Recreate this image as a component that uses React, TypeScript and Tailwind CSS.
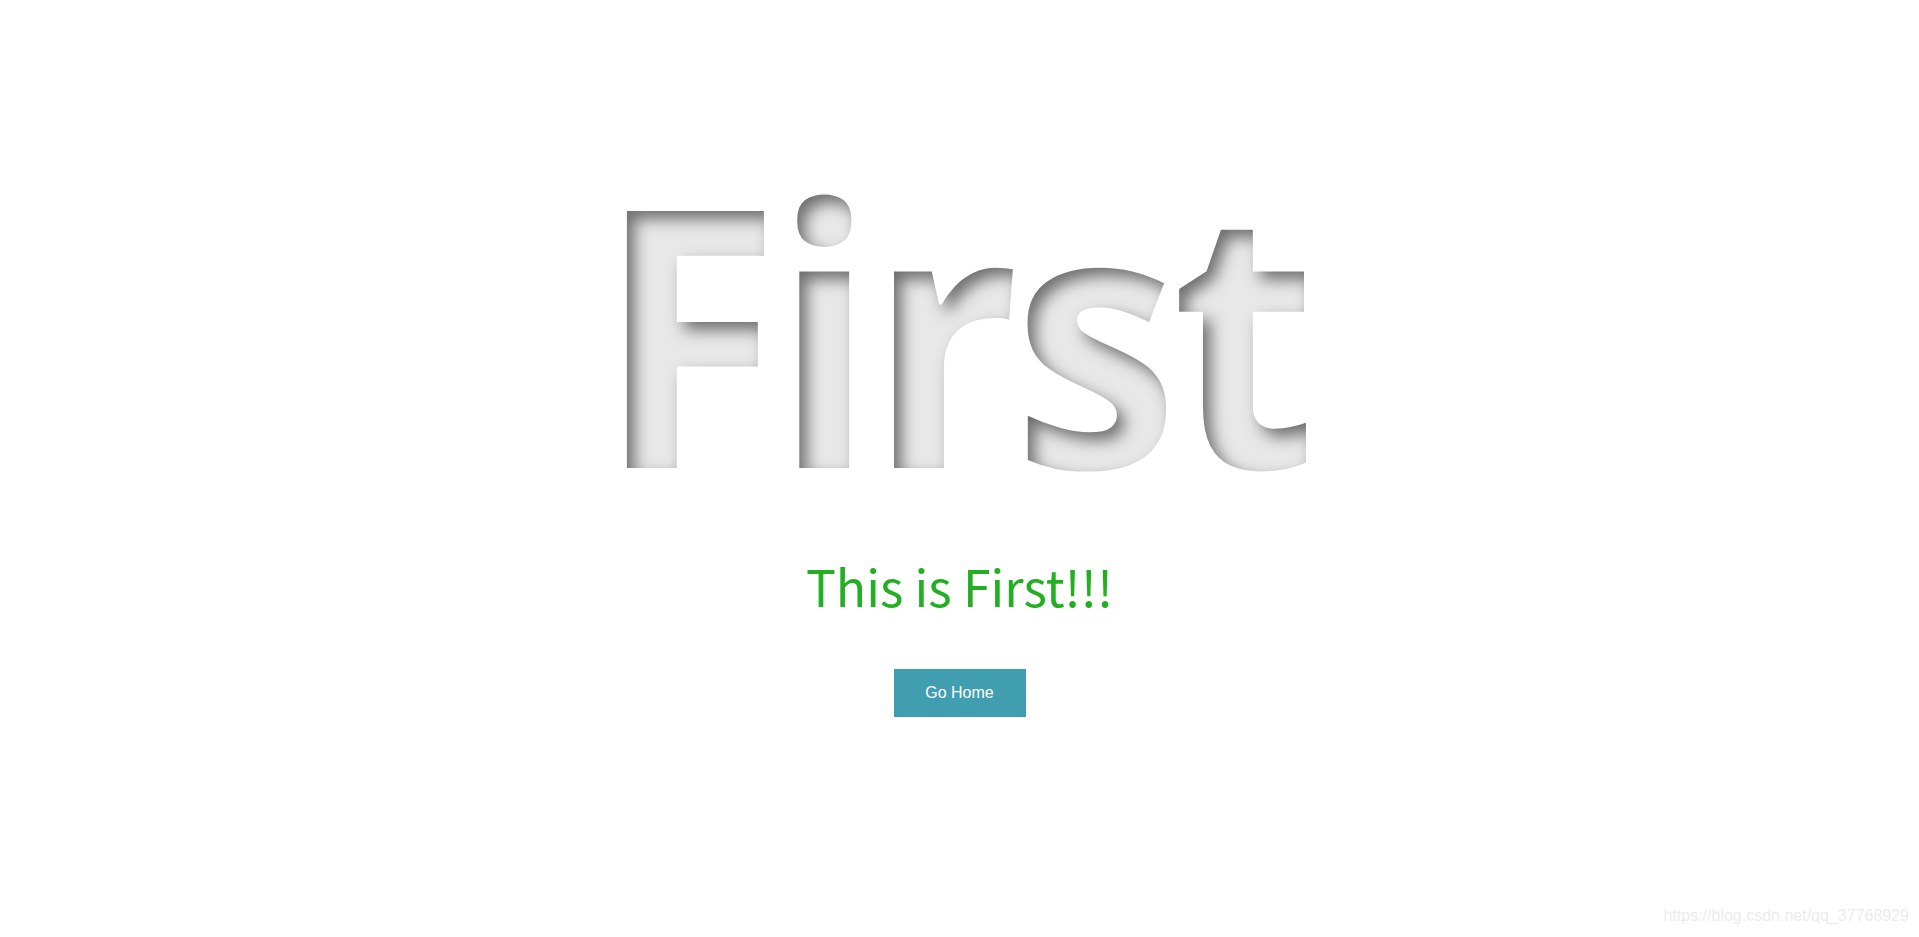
export default function App() {
  return (
    <div className="relative min-h-[937px] bg-white">
      <div className="flex flex-col items-center pt-[148px]">
        {/* big inset title */}
        <h1 className="mr-[13px] scale-x-[0.93] text-[360px] leading-none font-[750] tracking-[-8px] bg-[#6e6e6e] bg-clip-text text-transparent [text-shadow:8px_8px_16px_rgba(255,255,255,0.84)] [font-family:'Open_Sans',sans-serif]">
          First
        </h1>

        <p className="mt-[52px] text-[50px] leading-none text-[#22b022] [font-family:'Noto_Sans_CJK_SC',sans-serif]">
          This is First!!!
        </p>

        <button className="mt-[59px] w-[132px] h-[48px] bg-[#419eb0] text-white text-[16px] [font-family:'Liberation_Sans',Arial,sans-serif]">
          Go Home
        </button>
      </div>

      {/* watermark */}
      <span className="absolute right-[10px] bottom-[9px] text-[16px] text-[#ececec] [font-family:'Liberation_Sans',Arial,sans-serif]">
        https://blog.csdn.net/qq_37768929
      </span>
    </div>
  );
}
